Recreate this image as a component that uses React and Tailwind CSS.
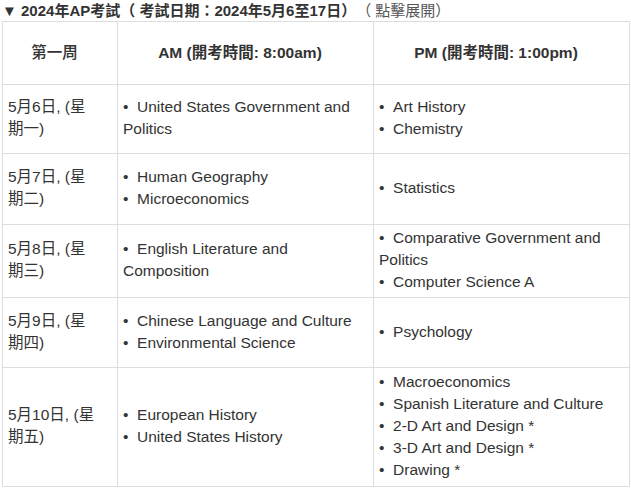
import React from "react";

const rows = [
  { d: "5月6日, (星期一)", am: ["United States Government and Politics"], pm: ["Art History", "Chemistry"], h: "h-[69px]" },
  { d: "5月7日, (星期二)", am: ["Human Geography", "Microeconomics"], pm: ["Statistics"], h: "h-[71px]" },
  { d: "5月8日, (星期三)", am: ["English Literature and Composition"], pm: ["Comparative Government and Politics", "Computer Science A"], h: "h-[72px]" },
  { d: "5月9日, (星期四)", am: ["Chinese Language and Culture", "Environmental Science"], pm: ["Psychology"], h: "h-[70px]" },
  { d: "5月10日, (星期五)", am: ["European History", "United States History"], pm: ["Macroeconomics", "Spanish Literature and Culture", "2-D Art and Design *", "3-D Art and Design *", "Drawing *"], h: "h-[119px]" },
];

function Items({ list }) {
  return (
    <div>
      {list.map((t) => (
        <div key={t}>{"•\u00a0\u00a0" + t}</div>
      ))}
    </div>
  );
}

export default function App() {
  return (
    <div
      className="w-[631px] h-[488px] bg-white text-[#333333] text-[15.5px] leading-[22px] overflow-hidden"
      style={{ fontFamily: '"Liberation Sans", Arial, "Noto Sans CJK TC", sans-serif' }}
    >
      <div className="h-[21px] flex items-center pl-[2px] whitespace-nowrap text-[15px]">
        <span className="font-bold">▼ 2024年AP考試（ 考試日期：2024年5月6至17日）</span>
        <span className="text-[#555555]">（ 點擊展開）</span>
      </div>
      <table className="ml-[2px] w-[627px] table-fixed border-collapse border border-[#dddddd]">
        <colgroup>
          <col className="w-[115px]" />
          <col className="w-[256px]" />
          <col className="w-[256px]" />
        </colgroup>
        <thead>
          <tr className="h-[63px]">
            <th className="border border-[#dddddd] align-middle text-center pl-[5px] pr-[16px] font-medium">第一周</th>
            <th className="border border-[#dddddd] align-middle text-center pl-[5px] pr-[16px] font-bold">AM (開考時間: 8:00am)</th>
            <th className="border border-[#dddddd] align-middle text-center pl-[5px] pr-[16px] font-bold">PM (開考時間: 1:00pm)</th>
          </tr>
        </thead>
        <tbody>
          {rows.map((r) => (
            <tr key={r.d} className={r.h}>
              <td className="border border-[#dddddd] align-middle pl-[5px] pr-[20px] pt-[2px] pb-[4px]">{r.d}</td>
              <td className="border border-[#dddddd] align-middle pl-[5px] pr-[5px] pt-[2px] pb-[4px]">
                <Items list={r.am} />
              </td>
              <td className="border border-[#dddddd] align-middle pl-[5px] pr-[5px] pt-[2px] pb-[4px]">
                <Items list={r.pm} />
              </td>
            </tr>
          ))}
        </tbody>
      </table>
    </div>
  );
}
